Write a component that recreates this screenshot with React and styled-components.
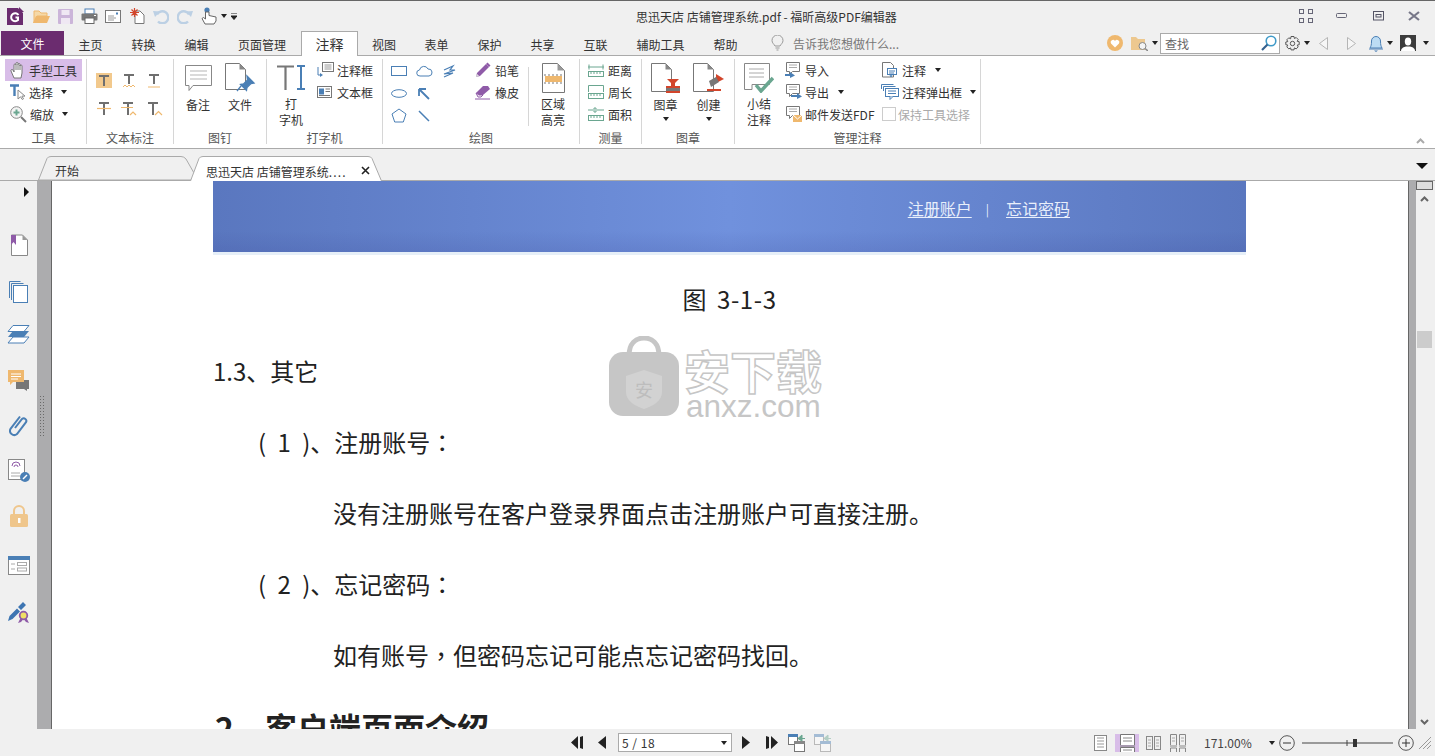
import React from "react";
import styled, { createGlobalStyle } from "styled-components";

const B = "#4a7fb5", G = "#7a7a7a", O = "#efb86e", P = "#8f5ba8", T = "#6aa690", R = "#d2452b";
const FONT = '"Noto Sans CJK SC", "Noto Sans", sans-serif';

const Global = createGlobalStyle`
  html, body { margin: 0; padding: 0; overflow: hidden; background: #f0f0f0; }
  body { font-family: ${FONT}; font-size: 12px; color: #333; }
  * { box-sizing: border-box; }
`;

const Svg = styled.svg`display: block; flex-shrink: 0;`;
const Ic = ({ w = 16, h = 16, children }) => (
  <Svg width={w} height={h} viewBox={`0 0 ${w} ${h}`} fill="none">{children}</Svg>
);

const Window = styled.div`
  width: 1435px; height: 756px; display: flex; flex-direction: column;
  border-top: 1px solid #666; background: #f0f0f0; overflow: hidden;
`;
const TitleBar = styled.div`height: 30px; display: flex; align-items: center; flex-shrink: 0;`;
const Qat = styled.div`width: 636px; padding-left: 3px; display: flex; align-items: center;`;
const QatCell = styled.div`
  width: ${p => p.$w || 24}px; margin-right: ${p => p.$mr || 0}px; height: 30px;
  display: flex; align-items: center; justify-content: center; flex-shrink: 0;
`;
const Title = styled.div`font-size: 12px; color: #333; white-space: nowrap;`;
const WinButtons = styled.div`margin-left: auto; padding-right: 3px; display: flex;`;
const WinBtn = styled.div`width: 36px; height: 30px; display: flex; align-items: center; justify-content: center;`;

const TabRow = styled.div`
  height: 25px; display: flex; align-items: flex-end; padding-left: 1px;
  border-bottom: 1px solid #aaa; flex-shrink: 0;
`;
const FileTab = styled.div`
  width: 63px; height: 24px; background: #6b2c6f; color: #fff; display: flex;
  align-items: center; justify-content: center; font-size: 12px;
`;
const MenuTab = styled.div`
  width: ${p => p.$w}px; height: 25px; margin-bottom: -1px; display: flex; align-items: center;
  justify-content: center; color: #333; position: relative;
  font-size: ${p => (p.$active ? 14 : 12)}px;
  background: ${p => (p.$active ? "#fff" : "transparent")};
  border: 1px solid ${p => (p.$active ? "#aaa" : "transparent")};
  border-bottom: none;
`;
const Tell = styled.div`
  margin-left: 19px; height: 24px; display: flex; align-items: center; gap: 9px;
  color: #777; font-size: 12px; white-space: nowrap;
`;
const RightTools = styled.div`margin-left: auto; padding-right: 5px; height: 24px; display: flex; align-items: center;`;
const ToolCell = styled.div`width: ${p => p.$w}px; height: 24px; display: flex; align-items: center; justify-content: center; flex-shrink: 0;`;
const SearchBox = styled.div`
  width: 120px; height: 21px; margin-left: 2px; border: 1px solid #aaa; background: #fff;
  display: flex; align-items: center; justify-content: space-between; padding: 0 2px 0 4px; color: #666;
`;

const Ribbon = styled.div`
  height: 93px; background: #fff; border-bottom: 1px solid #aaa; padding: 3px 0 0 1px;
  display: flex; flex-shrink: 0; position: relative;
`;
const Group = styled.div`
  width: ${p => p.$w}px; height: 85px; border-right: 1px solid #d6d6d6;
  display: flex; flex-direction: column; flex-shrink: 0;
`;
const GroupBody = styled.div`height: 69px; display: flex; flex-shrink: 0; padding-left: ${p => p.$pl || 0}px;`;
const GroupLabel = styled.div`height: 20px; line-height: 20px; text-align: center; color: #555; font-size: 12px; flex-shrink: 0;`;
const ToolRow = styled.div`
  height: 22px; display: flex; align-items: center; gap: ${p => p.$gap || 3}px; white-space: nowrap; color: #333;
  padding-left: ${p => p.$pl || 0}px; margin-left: ${p => p.$ml || 0}px;
  width: ${p => (p.$w ? p.$w + "px" : "auto")};
  background: ${p => (p.$on ? "#d8bde8" : "transparent")};
`;
const RowCol = styled.div`
  margin-left: ${p => p.$ml || 0}px;
  width: ${p => (p.$w ? p.$w + "px" : "auto")}; flex-shrink: 0;
`;
const IconGrid = styled.div`
  display: grid; grid-template-columns: repeat(3, 25px); grid-auto-rows: ${p => p.$row}px;
  padding-top: ${p => p.$pt}px; justify-items: center; align-items: center; margin-left: 4px;
`;
const BigBtn = styled.div`
  width: ${p => p.$w}px; display: flex; flex-direction: column; align-items: center; flex-shrink: 0;
  line-height: 16px; color: #333; text-align: center; margin-left: ${p => p.$ml || 0}px;
`;
const BigIcon = styled.div`height: 38px; display: flex; align-items: center; justify-content: center;`;
const Caret = styled.span`
  display: block; width: 0; height: 0; flex-shrink: 0; margin-left: ${p => p.$ml || 0}px;
  border-left: 3px solid transparent; border-right: 3px solid transparent; border-top: 4px solid #222;
`;
const CaretBelow = styled(Caret)`margin: 4px auto 0;`;
const VLine = styled.div`width: 1px; height: 59px; background: #d6d6d6; margin: 8px 0 0 9px; flex-shrink: 0;`;
const CheckBox = styled.span`width: 14px; height: 14px; border: 1px solid #ccc; background: #fff; display: block; margin-left: 1px;`;
const Disabled = styled.span`color: #aaa;`;
const Collapse = styled.div`position: absolute; right: 10px; bottom: 4px;`;

const Strip = styled.div`
  height: 32px; display: flex; align-items: flex-end; padding-left: 38px;
  border-bottom: 1px solid #aaa; flex-shrink: 0;
`;
const DocTab = styled.div`
  position: relative; width: ${p => p.$w}px; height: ${p => p.$h}px; margin-left: ${p => p.$ml || 0}px;
  margin-bottom: ${p => (p.$active ? -1 : 0)}px; z-index: ${p => (p.$active ? 2 : 1)};
  display: flex; align-items: center; color: #333;
  padding: 5px 0 0 ${p => p.$pad}px; white-space: nowrap;
`;
const TabShape = styled.svg`position: absolute; left: 0; top: 0;`;
const TabText = styled.span`position: relative;`;
const TabDots = styled.span`letter-spacing: 1.2px;`;
const TabClose = styled.span`position: absolute; left: 171px; top: 10px; display: block;`;
const StripMenu = styled.div`margin-left: auto; margin-right: 7px; margin-bottom: 11px;`;

const Main = styled.div`height: 548px; display: flex; flex-shrink: 0;`;
const Side = styled.div`width: 37px; display: flex; flex-direction: column; align-items: center; flex-shrink: 0;`;
const SideArrow = styled.div`height: 22px; width: 37px; display: flex; align-items: center; justify-content: flex-end; padding-right: 8px; margin-bottom: 19px;`;
const SideItem = styled.div`height: 45px; margin-top: ${p => p.$mt || 0}px; display: flex; align-items: center; justify-content: center; flex-shrink: 0;`;
const Rail = styled.div`width: 15px; background: #acacae; border-right: 1px solid #666; flex-shrink: 0;`;
const Grip = styled.div`
  width: 6px; height: 42px; margin: 214px 0 0 2px;
  background-image: radial-gradient(#6a6a6a 0.7px, transparent 0.9px); background-size: 3px 3px;
`;
const Paper = styled.div`
  position: relative; width: 1356px; background: #fff; padding-left: 161px; overflow: hidden; flex-shrink: 0;
  color: #222; font-size: 24px;
`;
const Banner = styled.div`
  width: 1033px; height: 74px; margin-bottom: 8px; padding: 0 176px 17px 0;
  display: flex; align-items: center; justify-content: flex-end; gap: 14px;
  border-bottom: 3px solid #e6eff8; color: #e9effb; font-size: 16px;
  background:
    linear-gradient(180deg, rgba(50,60,140,0) 70%, rgba(50,60,140,.14) 100%),
    linear-gradient(90deg, #5a77bf 0%, #7091dd 50%, #5a77bf 100%);
  background-origin: padding-box; background-clip: padding-box;
`;
const BannerLink = styled.span`text-decoration: underline; text-underline-offset: 2px;`;
const BannerBar = styled.span`font-size: 12px; margin-right: 3px;`;
const Caption = styled.div`height: 72px; line-height: 72px; width: 1033px; text-align: center; word-spacing: 4px; letter-spacing: .6px;`;
const Line = styled.div`height: 71px; line-height: 71px; padding-left: ${p => p.$in || 0}px; white-space: nowrap;`;
const Paren = styled.span`word-spacing: 6px;`;
const Punct = styled.span`font-family: "Noto Sans CJK TC", "Noto Sans CJK SC", sans-serif;`;
const Heading = styled.div`height: 74px; line-height: 74px; font-size: 32px; font-weight: 700; white-space: nowrap; display: flex; padding-left: 2px;`;
const HeadNum = styled.span`width: 50px;`;
const Watermark = styled.div`position: absolute; left: 557px; top: 155px; display: flex; gap: 5px; pointer-events: none;`;
const MarkWords = styled.div`display: flex; flex-direction: column; padding-top: 8px;`;
const MarkCn = styled.div`
  font-size: 46px; line-height: 50px; font-weight: 700; color: #fff; -webkit-text-stroke: 1.5px #c6c6c6;
  white-space: nowrap;
`;
const MarkEn = styled.div`
  font-family: "Liberation Sans", sans-serif; font-size: 31.5px; line-height: 24px; color: #c6c6c6; padding-left: 2px; white-space: nowrap;
`;
const RightRail = styled.div`width: 8px; background: #acacae; border-left: 1px solid #666; flex-shrink: 0;`;
const Scroll = styled.div`width: 19px; display: flex; flex-direction: column; align-items: flex-start; flex-shrink: 0;`;
const ScrollTop = styled.div`width: 17px; height: 9px; border: 1px solid #666; background: #ddd;`;
const ScrollIcon = styled.div`width: 17px; height: 10px; margin-top: ${p => p.$mt || 0}px; margin-bottom: ${p => p.$mb || 0}px; display: flex; justify-content: center; align-items: center;`;
const ScrollAuto = styled(ScrollIcon)`margin-top: auto;`;
const Thumb = styled.div`width: 15px; height: 17px; margin: 127px 0 0 1px; background: #ccc;`;

const Status = styled.div`height: 27px; display: flex; align-items: center; padding-left: 566px; flex-shrink: 0;`;
const StatusCell = styled.div`
  width: ${p => p.$w}px; height: 18px; margin-left: ${p => p.$ml || 0}px; display: flex; align-items: center; justify-content: center;
  flex-shrink: 0; background: ${p => (p.$on ? "#d8bde8" : "transparent")};
`;
const PageBox = styled.div`
  width: 114px; height: 19px; margin-left: 2px; background: #fff; border: 1px solid #aaa; display: flex; align-items: center;
  justify-content: space-between; padding: 0 4px 0 3px; color: #333; font-size: 12px; letter-spacing: .5px;
`;
const StatusRight = styled.div`margin-left: auto; padding-right: 4px; display: flex; align-items: center;`;
const Zoom = styled.div`margin-left: 14px; width: 52px; color: #444; white-space: nowrap; font-size: 12px;`;

/* ---------- quick access icons ---------- */
const AppLogo = () => (<Ic w={17} h={18}>
  <path d="M0 1h11l5 5v12H0z" fill="#6b2c6f" /><path d="M12 0l5 5h-5z" fill="#6b2c6f" />
  <path d="M11.500 8A4 4 0 1 0 11 13V10.500H8.500" stroke="#fff" strokeWidth="2" />
</Ic>);
const OpenIcon = () => (<Ic w={17} h={15}>
  <path d="M1 2h5l2 2h6v3H4L1 14z" fill="#f5d9a8" stroke={O} /><path d="M0 14l3-7h14l-3 7z" fill={O} />
</Ic>);
const SaveIcon = () => (<Ic w={15} h={15}>
  <rect width="15" height="15" rx="1" fill="#cbb5d9" /><rect x="3.500" y="1" width="8" height="5" fill="#efe8f3" /><rect x="3" y="9" width="9" height="6" fill="#efe8f3" />
</Ic>);
const PrintIcon = () => (<Ic w={17} h={16}>
  <rect x="4" y="1" width="9" height="5" fill="#fff" stroke={B} /><rect x=".5" y="5.500" width="16" height="7" rx="1" fill="#777" />
  <rect x="4" y="10" width="9" height="5.500" fill="#fff" stroke="#666" /><rect x="13" y="7" width="2" height="1" fill="#fff" />
</Ic>);
const MailIcon = () => (<Ic w={16} h={13}>
  <rect x=".5" y=".5" width="15" height="12" fill="#fff" stroke="#777" />
  <path d="M3 6h6M3 8h8M3 10h6" stroke="#999" /><rect x="11" y="2.500" width="2" height="2" fill={B} />
</Ic>);
const BurstIcon = () => (<Ic w={15} h={16}>
  <path d="M5 3h5l4 4v8.500H5z" fill="#fff" stroke="#777" />
  <path d="M4.500 0v9M0 4.500h9M1.500 1.500l6 6M7.500 1.500l-6 6" stroke={R} strokeWidth="1.200" />
</Ic>);
const UndoIcon = ({ flip }) => (<Ic w={16} h={15}>
  <g transform={flip ? "translate(16 0) scale(-1 1)" : undefined}>
    <path d="M4 5.500A6 6 0 1 1 5 12.500" stroke="#bcd0e4" strokeWidth="2.400" /><path d="M0 2l7 .5L2 8z" fill="#bcd0e4" />
  </g>
</Ic>);
const TouchIcon = () => (<Ic w={18} h={18}>
  <circle cx="7" cy="3" r="2.600" fill={B} />
  <path d="M5.500 5v7L3.500 10.500 2 11.500 5 17h9l2-3v-4l-7-1.500V5z" fill="#fff" stroke="#666" />
</Ic>);
const Customize = () => (<Ic w={6} h={7}><path d="M0 0h6M0 3h6l-3 3.500z" stroke="#222" fill="#222" /></Ic>);

const WinFull = () => (<Ic w={14} h={14}>
  {[[0, 0], [9, 0], [0, 9], [9, 9]].map(([x, y]) => <rect key={x + "-" + y} x={x + .5} y={y + .5} width="4" height="4" stroke="#667" />)}
</Ic>);
const WinMin = () => (<Ic w={12} h={6}><rect x=".5" y=".5" width="10" height="4" rx="1" fill="#f0f0f0" stroke="#667" /></Ic>);
const WinMax = () => (<Ic w={11} h={10}><rect x=".5" y=".5" width="10" height="8.500" stroke="#556" /><rect x="3" y="3.500" width="5" height="2.500" stroke="#556" /></Ic>);
const WinClose = () => (<Ic w={12} h={10}><path d="M1 1l10 8M11 1L1 9" stroke="#778" strokeWidth="2.200" /></Ic>);

/* ---------- top right ---------- */
const Bulb = () => (<Ic w={13} h={16}>
  <path d="M4 11C3 9 1 8 1 5.500a5.500 5.500 0 0 1 11 0C12 8 10 9 9 11z" stroke="#999" /><path d="M4.500 13h4M5.500 15h2" stroke="#999" />
</Ic>);
const Heart = () => (<Ic w={16} h={16}>
  <circle cx="8" cy="8" r="8" fill={O} /><path d="M8 12.500L4 8.500a2.300 2.300 0 0 1 4-2.500 2.300 2.300 0 0 1 4 2.500z" fill="#fff" />
</Ic>);
const FolderFind = () => (<Ic w={17} h={15}>
  <path d="M0 1h5l2 2h7v11H0z" fill="#edc88f" />
  <circle cx="11.500" cy="10" r="3.500" fill="#f4f4f4" stroke="#888" /><path d="M14 12.500l3 2.500" stroke="#888" strokeWidth="1.500" />
</Ic>);
const Magnifier = () => (<Ic w={16} h={16}>
  <circle cx="10" cy="6" r="4.800" stroke="#3f9ac8" strokeWidth="1.600" /><path d="M6.500 9.500L1 15" stroke="#35618f" strokeWidth="2.200" />
</Ic>);
const Gear = () => (<Ic w={15} h={15}>
  <circle cx="7.500" cy="7.500" r="2.200" stroke="#555" />
  <path d="M6 .5h3l.4 2 1.800-1 2 2-1 1.800 2 .4v3l-2 .4 1 1.800-2 2-1.800-1-.4 2H6l-.4-2-1.800 1-2-2 1-1.800-2-.4V6l2-.4-1-1.800 2-2 1.800 1z" stroke="#555" strokeLinejoin="round" />
</Ic>);
const TriL = ({ flip }) => (<Ic w={9} h={13}><path d={flip ? "M.5.500l8 6-8 6z" : "M8.500.500l-8 6 8 6z"} fill="#f6f6f6" stroke="#b5b5b5" /></Ic>);
const Bell = () => (<Ic w={14} h={17}>
  <path d="M1 13c1-2 1.500-3 1.500-7a4.500 4.500 0 0 1 9 0c0 4 .5 5 1.500 7z" fill="#bcdcf4" stroke={B} /><path d="M0 14h14" stroke={B} /><path d="M5 15.500h4L7 17z" fill={B} />
</Ic>);
const Avatar = () => (<Ic w={16} h={16}>
  <rect width="16" height="16" fill="#3c3c3c" /><ellipse cx="8" cy="6.500" rx="3.200" ry="4" fill="#fff" /><path d="M1 16c0-3 3-4 5-4.500h4c2 .5 5 1.500 5 4.500z" fill="#fff" />
</Ic>);

/* ---------- ribbon icons ---------- */
const Hand = () => (<Ic w={16} h={17}>
  <path d="M4 16L1 9c-.5-1.500 1-2 2-1l1 2V3c0-1.500 2-1.500 2 0V1.500c0-1.500 2-1.500 2 0V2.500c0-1.500 2-1.500 2 0V4c0-1.500 2-1.500 2 0v7l-1 5z" fill="#fff" stroke="#777" />
  <path d="M6 3v5M8 2v6M10 3v5" stroke="#777" />
</Ic>);
const SelectIcon = () => (<Ic w={16} h={16}>
  <path d="M0 1.500h9M4.500 1v11" stroke={B} strokeWidth="2.400" /><path d="M8 6v9l2.500-2.200 1.800 2.700 1.200-.7-1.600-2.700H15z" fill="#fff" stroke="#888" />
</Ic>);
const ZoomIcon = () => (<Ic w={17} h={17}>
  <circle cx="6.500" cy="6.500" r="5.800" fill="#f4f4f4" stroke="#888" /><path d="M6.500 3.500v6M3.500 6.500h6" stroke={T} strokeWidth="2" /><path d="M11 11l5 5" stroke="#777" strokeWidth="2" />
</Ic>);
const TGlyph = ({ children, y = 1, h = 13 }) => (
  <><path d={`M3 ${y}h10v2H9v${h - 2}H7V${y + 2}H3z`} fill="#6f6f6f" />{children}</>
);
const THigh = () => (<Ic w={16} h={16}><rect width="16" height="15" fill="#f2c98d" /><TGlyph y={2} h={11} /></Ic>);
const TWave = () => (<Ic><TGlyph h={10} /><path d="M2 14l2-2 2 2 2-2 2 2 2-2 2 2" stroke={O} /></Ic>);
const TUnder = () => (<Ic><TGlyph h={10} /><path d="M2 14h12" stroke={O} /></Ic>);
const TStrike = () => (<Ic><TGlyph h={13} /><path d="M1 7.500h14" stroke={O} strokeWidth="1.200" /></Ic>);
const TReplace = () => (<Ic w={18}><TGlyph h={13} /><path d="M1 6.500h12M10 14l3-3 3 3" stroke={O} strokeWidth="1.200" /></Ic>);
const TInsert = () => (<Ic w={18}><TGlyph h={13} /><path d="M10 14l3.500-3.500L17 14" stroke={O} strokeWidth="1.200" /></Ic>);
const NoteIcon = () => (<Ic w={27} h={26}>
  <path d="M.5.500h26v20H8l-4 5v-5H.5z" fill="#fff" stroke="#888" /><path d="M5 6h17M5 10h17M5 14h17" stroke="#b5b5b5" />
</Ic>);
const DocPin = () => (<Ic w={31} h={31}>
  <path d="M.5.500h14l6 6v20H.5z" fill="#fff" stroke="#777" /><path d="M14.500.500v6h6z" fill="#888" />
  <path d="M22 13l7 7-3 .5-4 4-.5 3-6-6 3-.5 4-4zM16 23l-4 5" fill={B} stroke={B} strokeWidth="1.300" />
</Ic>);
const Typewriter = () => (<Ic w={30} h={25}>
  <path d="M1 1.500h17M9.500 1.500V25" stroke="#777" strokeWidth="2.200" />
  <path d="M21 1h8M21 24h8M25 1v23" stroke={B} strokeWidth="2" />
</Ic>);
const CalloutBox = () => (<Ic w={17} h={16}>
  <rect x="5.500" y=".5" width="11" height="9" fill="#fff" stroke="#777" /><path d="M7.500 3h7M7.500 5h7M7.500 7h7" stroke="#999" />
  <path d="M1 5v8h3" stroke={B} /><path d="M3 11l3 2-3 2z" fill={B} />
</Ic>);
const TextBox = () => (<Ic w={15} h={12}>
  <rect x=".5" y=".5" width="14" height="11" fill="#fff" stroke="#777" /><rect x="2" y="2.500" width="5" height="6" fill={B} /><path d="M8.500 3h4.500M8.500 5.500h4.500M2 9.500h11" stroke="#777" />
</Ic>);
const S = ({ children, w = 17, h = 15 }) => <Ic w={w} h={h}>{children}</Ic>;
const Shapes = [
  <S key="1"><rect x=".5" y="2.500" width="15" height="9" stroke={B} /></S>,
  <S key="2"><path d="M4 12a3 3 0 0 1-.5-6A4.500 4.500 0 0 1 12 5a3.500 3.500 0 0 1 1 7z" stroke={B} /></S>,
  <S key="3"><path d="M3 6l9-4-3 4h5L3 10l9-1-9 4" stroke={B} strokeWidth="1.200" /></S>,
  <S key="4"><ellipse cx="8" cy="7.500" rx="7.500" ry="3.800" stroke={B} /></S>,
  <S key="5"><path d="M3 3h7M3 3v7M3 3l10 10" stroke={B} strokeWidth="1.800" /></S>,
  <S key="7" />,
  <S key="6"><path d="M8 1l7 5-2.700 8H3.700L1 6z" stroke={B} /></S>,
  <S key="8"><path d="M3 3l10 10" stroke={B} strokeWidth="1.500" /></S>,
];
const Pencil = () => (<Ic w={16} h={16}><path d="M1 15l1-4 9-9 3 3-9 9z" fill={P} /><path d="M11 2l1.500-1.500 3 3L14 5z" fill={P} /><path d="M1 15l.8-3.200L4.200 14z" fill="#ddd" /></Ic>);
const Eraser = () => (<Ic w={16} h={16}><path d="M1 9l7-7h5l2 3-7 6H4z" fill={P} /><path d="M1 9l3 2h4L6 13H3z" fill="#fff" stroke={P} /><path d="M0 15h15" stroke={P} /></Ic>);
const AreaHi = () => (<Ic w={23} h={30}>
  <path d="M.5.500h15l7 7v22H.5z" fill="#fff" stroke="#777" /><path d="M15.500.500v7h7z" fill="#999" />
  <rect x="3" y="13" width="17" height="6" fill={O} /><path d="M2 12h19M2 20h19" stroke="#777" strokeDasharray="2 2" />
</Ic>);
const Ruler = ({ kind }) => (<Ic w={16} h={14}>
  <rect x=".5" y="8.500" width="15" height="5" stroke={T} /><path d="M3 9v2M6 9v2M9 9v2M12 9v2" stroke={T} />
  {kind === 0 && <path d="M0 4h16M1 1.500v5M15 1.500v5" stroke={T} />}
  {kind === 1 && <path d="M.5 7V.5h15V7" stroke={T} />}
  {kind === 2 && <path d="M0 3h5M9 3h7M6 1h2v4H6z" stroke={T} />}
</Ic>);
const Stamp = () => (<Ic w={29} h={30}>
  <path d="M.5.500h14l6 6v22H.5z" fill="#fff" stroke="#777" /><path d="M14.500.500v6h6z" fill="#888" />
  <path d="M16 16h12l-4 4v3h5v2H15v-2h5v-3z" fill={R} /><rect x="15" y="25" width="14" height="3" fill="#777" /><rect x="15" y="28" width="14" height="2" fill={R} />
</Ic>);
const StampNew = () => (<Ic w={32} h={30}>
  <path d="M.5.500h14l6 6v22H.5z" fill="#fff" stroke="#777" /><path d="M14.500.500v6h6z" fill="#888" />
  <path d="M23 11l8 5-8 4z" fill={R} /><path d="M16 18l7-4 3 5-8 5z" fill="#777" /><path d="M14 27h14" stroke={R} strokeWidth="2" />
</Ic>);
const Summary = () => (<Ic w={30} h={30}>
  <path d="M.5.500h25v21H8v5H.5z" fill="#fff" stroke="#888" /><path d="M5 6h15M5 10h15M5 14h15" stroke="#aaa" />
  <path d="M12 22l5 6L29 15" stroke={T} strokeWidth="3.500" />
</Ic>);
const Comment = ({ children }) => (<Ic w={17} h={16}>
  <path d="M1.500.500h13v9h-7l-3 3v-3h-3z" fill="#fff" stroke="#777" /><path d="M4 3h8M4 5.500h8" stroke="#aaa" />{children}
</Ic>);
const ArrowIn = <path d="M0 12h5V10l5 3.500L5 16v-2H0z" fill={B} />;
const ArrowOut = <path d="M6 11h6V9l5 3.500L12 15v-2H6z" fill={B} />;
const Envelope = <><rect x="8" y="9" width="9" height="7" fill={O} /><path d="M8 9l4.500 4L17 9" stroke="#fff" /></>;
const NoteDoc = () => (<Ic w={17} h={16}>
  <path d="M1.500.500h8l3 3V15h-11z" fill="#fff" stroke="#777" /><rect x="6.500" y="6.500" width="9" height="6" fill="#fff" stroke={B} /><path d="M8 9h6M8 11h5" stroke={B} /><path d="M9 13l1 2 1-2" stroke={B} />
</Ic>);
const Popups = () => (<Ic w={18} h={16}>
  <path d="M.5 5V.5h12M2.500 7V2.500h12" stroke={B} /><rect x="4.500" y="4.500" width="13" height="8" fill="#fff" stroke={B} /><path d="M7 7h8M7 9.500h8" stroke={B} /><path d="M9 12.500v3l3-3" stroke={B} fill="#fff" />
</Ic>);

/* ---------- side icons ---------- */
const SBookmark = () => (<Ic w={18} h={22}>
  <path d="M1.500 1h11l5 5v15.500h-16z" fill="#fff" stroke="#888" /><path d="M12.500 1v5h5z" fill="#999" /><path d="M1 1h5v10l-2.500-3L1 11z" fill={P} />
</Ic>);
const SPages = () => (<Ic w={19} h={22}>
  <path d="M.5 17V.5h11M2.500 19V2.500h12" stroke={B} /><rect x="4.500" y="4.500" width="14" height="17" fill="#fff" stroke={B} />
</Ic>);
const SLayers = () => (<Ic w={23} h={19}>
  <path d="M6 .5h16l-5 6H1z" fill="#fff" stroke={B} /><path d="M6 6h16l-5 6H1z" fill={B} /><path d="M6 12h16l-5 6H1z" fill="#fff" stroke={B} />
</Ic>);
const SComments = () => (<Ic w={22} h={21}>
  <path d="M8 10h13v9h-2v2l-3-2H8z" fill="#777" /><path d="M0 0h16v12H5l-3 3v-3H0z" fill={O} /><path d="M3 4h10M3 6.500h10M3 9h7" stroke="#fff" />
</Ic>);
const SClip = () => (<Ic w={20} h={24}>
  <path d="M6 14l7-9a2.600 2.600 0 0 1 4 3.200L8 20a4.200 4.200 0 0 1-6.300-5.400L11 2.500" stroke={B} strokeWidth="2" />
</Ic>);
const SSign = () => (<Ic w={22} h={23}>
  <rect x=".5" y=".5" width="16" height="20" fill="#fff" stroke="#888" /><path d="M4 7a4 4 0 0 1 8 0M6 8a2 2 0 0 1 4 0" stroke={P} /><path d="M3 14h9M3 17h9" stroke="#aaa" />
  <circle cx="17" cy="18" r="5" fill={B} /><path d="M15 20l4-4" stroke="#fff" strokeWidth="1.500" />
</Ic>);
const SLock = () => (<Ic w={18} h={22}>
  <path d="M4 9V6a5 5 0 0 1 10 0v3" stroke="#efc68c" strokeWidth="2" /><rect y="9" width="18" height="13" rx="1.500" fill="#efc68c" /><path d="M8 13h2.500v5H8z" fill="#fff" />
</Ic>);
const SForm = () => (<Ic w={22} h={19}>
  <rect x=".5" y=".5" width="21" height="18" fill="#fff" stroke="#888" /><rect width="22" height="4" fill={B} />
  <path d="M3 8h4M3 13h4" stroke="#aaa" /><rect x="9.500" y="6.500" width="9" height="3" stroke="#aaa" /><rect x="9.500" y="12" width="9" height="3" stroke="#aaa" />
</Ic>);
const SCert = () => (<Ic w={21} h={22}>
  <path d="M0 20l1.500-5L9 7.500l3 3L4.500 18zM10 6l5-5 3 3-5 5z" fill="#3d75b2" />
  <path d="M10 22l3.500-7h4l3.500 7-3-1-2.500-3-2.500 3z" fill={P} /><circle cx="15.500" cy="14.500" r="3.800" fill="#f0df66" stroke={P} strokeWidth="1.800" />
</Ic>);

/* ---------- status icons ---------- */
const D = "#222";
const First = () => (<Ic w={13} h={13}><path d="M7 0v13L0 6.500zM9 1l3-1v13l-3-1z" fill={D} /></Ic>);
const Prev = () => (<Ic w={8} h={13}><path d="M8 0v13L0 6.500z" fill={D} /></Ic>);
const Next = () => (<Ic w={8} h={13}><path d="M0 0v13l8-6.500z" fill={D} /></Ic>);
const Last = () => (<Ic w={13} h={13}><path d="M6 0v13l7-6.500zM4 1L1 0v13l3-1z" fill={D} /></Ic>);
const Move = ({ faded }) => (<Ic w={18} h={18}>
  <g opacity={faded ? .45 : 1}>
    <rect x=".5" y=".5" width="9" height="10" fill="#fff" stroke="#777" /><rect y="0" width="10" height="3" fill={B} />
    <rect x="6.500" y="7.500" width="10" height="10" fill="#fff" stroke="#777" /><rect x="6" y="7" width="11" height="3" fill={faded ? B : "#888"} />
    <path d="M14 1L10 4.500 14 7zM10 4.500h7" fill={T} stroke={T} />
  </g>
</Ic>);
const PageLines = () => <path d="M3 3h7M3 6h7M3 9h7M3 12h7" stroke="#999" />;
const VSingle = () => (<Ic w={13} h={16}><rect x=".5" y=".5" width="12" height="15" stroke="#888" fill="#fff" /><PageLines /></Ic>);
const VCont = () => (<Ic w={15} h={18}><path d="M.5 11V.5h14V11M.5 18v-4.500h14V18" stroke="#777" fill="#fff" /><path d="M3 4h9M3 7h9M3 16h9" stroke="#888" /><path d="M0 12h15" stroke="#777" /></Ic>);
const VFacing = () => (<Ic w={15} h={14}><rect x=".5" y=".5" width="6" height="13" stroke="#888" /><rect x="8.500" y=".5" width="6" height="13" stroke="#888" /><path d="M2 4h3M2 7h3M2 10h3M10 4h3M10 7h3M10 10h3" stroke="#aaa" /></Ic>);
const VCF = () => (<Ic w={16} h={18}><path d="M.5 11V.5h6V11M9.500 11V.5h6V11M0 12h7M9 12h7M.5 18v-4h6v4M9.500 18v-4h6v4" stroke="#888" /><path d="M2 4h3M2 7h3M11 4h3M11 7h3" stroke="#aaa" /></Ic>);
const CircleBtn = ({ plus }) => (<Ic w={16} h={16}>
  <circle cx="8" cy="8" r="7.300" stroke="#555" /><path d="M4 8h8" stroke="#333" />{plus && <path d="M8 4v8" stroke="#333" />}
</Ic>);
const Slider = () => (<Ic w={91} h={16}><path d="M0 8h91M45 5v6" stroke="#444" /><rect x="51" y="4" width="4" height="8" fill="#333" /></Ic>);
const GripCorner = () => (<Ic w={12} h={12}><path d="M0 12L12 0M4 12L12 4M8 12l4-4" stroke="#999" /></Ic>);
const ChevUp = ({ c = "#666" }) => (<Ic w={9} h={6}><path d="M1 5l3.500-3.500L8 5" stroke={c} strokeWidth="2" /></Ic>);
const ChevDown = () => (<Ic w={9} h={6}><path d="M1 1l3.500 3.500L8 1" stroke="#666" strokeWidth="2" /></Ic>);

const Bag = () => (<Ic w={70} h={80}>
  <path d="M20 20C20 7 27 2 35 2s15 5 15 18" stroke="#c6c6c6" strokeWidth="5" />
  <rect y="16" width="70" height="64" rx="14" fill="#c6c6c6" />
  <path d="M35 34l18 6v16c0 9-9 14-18 17-9-3-18-8-18-17V40z" fill="#d2d2d2" />
  <text x="35" y="61" textAnchor="middle" fontSize="18" fill="#bdbdbd" fontFamily={FONT}>安</text>
</Ic>);

const TABS = [["主页", 53], ["转换", 53], ["编辑", 53], ["页面管理", 78], ["注释", 57, true], ["视图", 52], ["表单", 53], ["保护", 53], ["共享", 53], ["互联", 53], ["辅助工具", 77], ["帮助", 53]];

export default function App() {
  return (
    <Window>
      <Global />
      <TitleBar>
        <Qat>
          <QatCell $mr={2}><AppLogo /></QatCell>
          <QatCell><OpenIcon /></QatCell>
          <QatCell><SaveIcon /></QatCell>
          <QatCell><PrintIcon /></QatCell>
          <QatCell><MailIcon /></QatCell>
          <QatCell><BurstIcon /></QatCell>
          <QatCell><UndoIcon /></QatCell>
          <QatCell><UndoIcon flip /></QatCell>
          <QatCell><TouchIcon /></QatCell>
          <QatCell $w={6}><Caret /></QatCell>
          <QatCell $w={14}><Customize /></QatCell>
        </Qat>
        <Title>思迅天店 店铺管理系统.pdf - 福昕高级PDF编辑器</Title>
        <WinButtons>
          <WinBtn><WinFull /></WinBtn>
          <WinBtn><WinMin /></WinBtn>
          <WinBtn><WinMax /></WinBtn>
          <WinBtn><WinClose /></WinBtn>
        </WinButtons>
      </TitleBar>

      <TabRow>
        <FileTab>文件</FileTab>
        {TABS.map(([t, w, a]) => <MenuTab key={t} $w={w} $active={a}>{t}</MenuTab>)}
        <Tell><Bulb />告诉我您想做什么...</Tell>
        <RightTools>
          <ToolCell $w={24}><Heart /></ToolCell>
          <ToolCell $w={25}><FolderFind /></ToolCell>
          <ToolCell $w={6}><Caret /></ToolCell>
          <SearchBox>查找<Magnifier /></SearchBox>
          <ToolCell $w={24}><Gear /></ToolCell>
          <ToolCell $w={6}><Caret /></ToolCell>
          <ToolCell $w={26}><TriL /></ToolCell>
          <ToolCell $w={30}><TriL flip /></ToolCell>
          <ToolCell $w={20}><Bell /></ToolCell>
          <ToolCell $w={8}><Caret /></ToolCell>
          <ToolCell $w={28}><Avatar /></ToolCell>
          <ToolCell $w={8}><Caret /></ToolCell>
        </RightTools>
      </TabRow>

      <Ribbon>
        <Group $w={86}>
          <GroupBody>
            <RowCol>
              <ToolRow $on $ml={4} $w={77} $pl={5}><Hand />手型工具</ToolRow>
              <ToolRow $ml={4} $pl={5}><SelectIcon />选择<Caret $ml={5} /></ToolRow>
              <ToolRow $ml={4} $pl={5}><ZoomIcon />缩放<Caret $ml={5} /></ToolRow>
            </RowCol>
          </GroupBody>
          <GroupLabel>工具</GroupLabel>
        </Group>
        <Group $w={87}>
          <GroupBody>
            <IconGrid $row={28} $pt={8}>
              <THigh /><TWave /><TUnder /><TStrike /><TReplace /><TInsert />
            </IconGrid>
          </GroupBody>
          <GroupLabel>文本标注</GroupLabel>
        </Group>
        <Group $w={93}>
          <GroupBody $pl={3}>
            <BigBtn $w={42}><BigIcon><NoteIcon /></BigIcon>备注</BigBtn>
            <BigBtn $w={42}><BigIcon><DocPin /></BigIcon>文件</BigBtn>
          </GroupBody>
          <GroupLabel>图钉</GroupLabel>
        </Group>
        <Group $w={116}>
          <GroupBody $pl={4}>
            <BigBtn $w={40}><BigIcon><Typewriter /></BigIcon>打<br />字机</BigBtn>
            <RowCol $ml={6}>
              <ToolRow><CalloutBox />注释框</ToolRow>
              <ToolRow $gap={5}><TextBox />文本框</ToolRow>
            </RowCol>
          </GroupBody>
          <GroupLabel>打字机</GroupLabel>
        </Group>
        <Group $w={197}>
          <GroupBody>
            <IconGrid $row={22} $pt={1}>{Shapes}</IconGrid>
            <RowCol $ml={13}>
              <ToolRow $gap={4}><Pencil />铅笔</ToolRow>
              <ToolRow $gap={4}><Eraser />橡皮</ToolRow>
            </RowCol>
            <VLine />
            <BigBtn $w={48}><BigIcon><AreaHi /></BigIcon>区域<br />高亮</BigBtn>
          </GroupBody>
          <GroupLabel>绘图</GroupLabel>
        </Group>
        <Group $w={62}>
          <GroupBody $pl={8}>
            <RowCol>
              <ToolRow $gap={4}><Ruler kind={0} />距离</ToolRow>
              <ToolRow $gap={4}><Ruler kind={1} />周长</ToolRow>
              <ToolRow $gap={4}><Ruler kind={2} />面积</ToolRow>
            </RowCol>
          </GroupBody>
          <GroupLabel>测量</GroupLabel>
        </Group>
        <Group $w={93}>
          <GroupBody $pl={2}>
            <BigBtn $w={43}><BigIcon><Stamp /></BigIcon>图章<CaretBelow /></BigBtn>
            <BigBtn $w={43}><BigIcon><StampNew /></BigIcon>创建<CaretBelow /></BigBtn>
          </GroupBody>
          <GroupLabel>图章</GroupLabel>
        </Group>
        <Group $w={246}>
          <GroupBody $pl={2}>
            <BigBtn $w={44}><BigIcon><Summary /></BigIcon>小结<br />注释</BigBtn>
            <RowCol $ml={4} $w={96}>
              <ToolRow><Comment>{ArrowIn}</Comment>导入</ToolRow>
              <ToolRow><Comment>{ArrowOut}</Comment>导出<Caret $ml={6} /></ToolRow>
              <ToolRow><Comment>{Envelope}</Comment>邮件发送FDF</ToolRow>
            </RowCol>
            <RowCol>
              <ToolRow $gap={4}><NoteDoc />注释<Caret $ml={5} /></ToolRow>
              <ToolRow $gap={3}><Popups />注释弹出框<Caret $ml={5} /></ToolRow>
              <ToolRow $gap={2}><CheckBox /><Disabled>保持工具选择</Disabled></ToolRow>
            </RowCol>
          </GroupBody>
          <GroupLabel>管理注释</GroupLabel>
        </Group>
        <Collapse><ChevUp c="#aaa" /></Collapse>
      </Ribbon>

      <Strip>
        <DocTab $w={156} $h={24} $pad={17}>
          <TabShape width="156" height="24" viewBox="0 0 156 24">
            <path d="M0.500 24L9 2.500Q10 .5 13 .5H143Q146 .5 148 3L156 17V24z" fill="#f0f0f0" stroke="#aaa" />
          </TabShape>
          <TabText>开始</TabText>
        </DocTab>
        <DocTab $active $w={192} $h={25} $ml={-4} $pad={16}>
          <TabShape width="192" height="25" viewBox="0 0 192 25">
            <path d="M.5 25L9 2.500Q10 .5 13 .5H178Q181 .5 182 2.500L191.500 25" fill="#fff" stroke="#aaa" />
          </TabShape>
          <TabText>思迅天店 店铺管理系统<TabDots>....</TabDots></TabText>
          <TabClose><Ic w={9} h={9}><path d="M1 1l7 7M8 1L1 8" stroke="#222" strokeWidth="1.600" /></Ic></TabClose>
        </DocTab>
        <StripMenu><Ic w={12} h={6}><path d="M0 0h12L6 6z" fill="#111" /></Ic></StripMenu>
      </Strip>

      <Main>
        <Side>
          <SideArrow><Ic w={5} h={10}><path d="M0 0l5 5-5 5z" fill="#111" /></Ic></SideArrow>
          <SideItem><SBookmark /></SideItem>
          <SideItem $mt={2}><SPages /></SideItem>
          <SideItem $mt={-2}><SLayers /></SideItem>
          <SideItem $mt={1}><SComments /></SideItem>
          <SideItem><SClip /></SideItem>
          <SideItem><SSign /></SideItem>
          <SideItem><SLock /></SideItem>
          <SideItem $mt={5}><SForm /></SideItem>
          <SideItem $mt={1}><SCert /></SideItem>
        </Side>
        <Rail><Grip /></Rail>
        <Paper>
          <Banner>
            <BannerLink>注册账户</BannerLink>
            <BannerBar>|</BannerBar>
            <BannerLink>忘记密码</BannerLink>
          </Banner>
          <Caption>图 3-1-3</Caption>
          <Line>1.3、其它</Line>
          <Line $in={45}><Paren>( 1 )</Paren>、注册账号<Punct>：</Punct></Line>
          <Line $in={120}>没有注册账号在客户登录界面点击注册账户可直接注册。</Line>
          <Line $in={45}><Paren>( 2 )</Paren>、忘记密码<Punct>：</Punct></Line>
          <Line $in={120}>如有账号<Punct>，</Punct>但密码忘记可能点忘记密码找回。</Line>
          <Heading><HeadNum>2、</HeadNum>客户端页面介绍</Heading>
          <Watermark>
            <Bag />
            <MarkWords>
              <MarkCn>安下载</MarkCn>
              <MarkEn>anxz.com</MarkEn>
            </MarkWords>
          </Watermark>
        </Paper>
        <RightRail />
        <Scroll>
          <ScrollTop />
          <ScrollIcon $mt={4}><ChevUp /></ScrollIcon>
          <Thumb />
          <ScrollAuto $mb={2}><ChevDown /></ScrollAuto>
        </Scroll>
      </Main>

      <Status>
        <StatusCell $w={22}><First /></StatusCell>
        <StatusCell $w={28}><Prev /></StatusCell>
        <PageBox>5 / 18<Caret /></PageBox>
        <StatusCell $w={28}><Next /></StatusCell>
        <StatusCell $w={22}><Last /></StatusCell>
        <StatusCell $w={30}><Move /></StatusCell>
        <StatusCell $w={22}><Move faded /></StatusCell>
        <StatusRight>
          <StatusCell $w={24}><VSingle /></StatusCell>
          <StatusCell $w={24} $ml={3} $on><VCont /></StatusCell>
          <StatusCell $w={24} $ml={2}><VFacing /></StatusCell>
          <StatusCell $w={24} $ml={1}><VCF /></StatusCell>
          <Zoom>171.00%</Zoom>
          <StatusCell $w={6} $ml={13}><Caret /></StatusCell>
          <StatusCell $w={24}><CircleBtn /></StatusCell>
          <StatusCell $w={91} $ml={3}><Slider /></StatusCell>
          <StatusCell $w={26}><CircleBtn plus /></StatusCell>
          <StatusCell $w={12}><GripCorner /></StatusCell>
        </StatusRight>
      </Status>
    </Window>
  );
}
